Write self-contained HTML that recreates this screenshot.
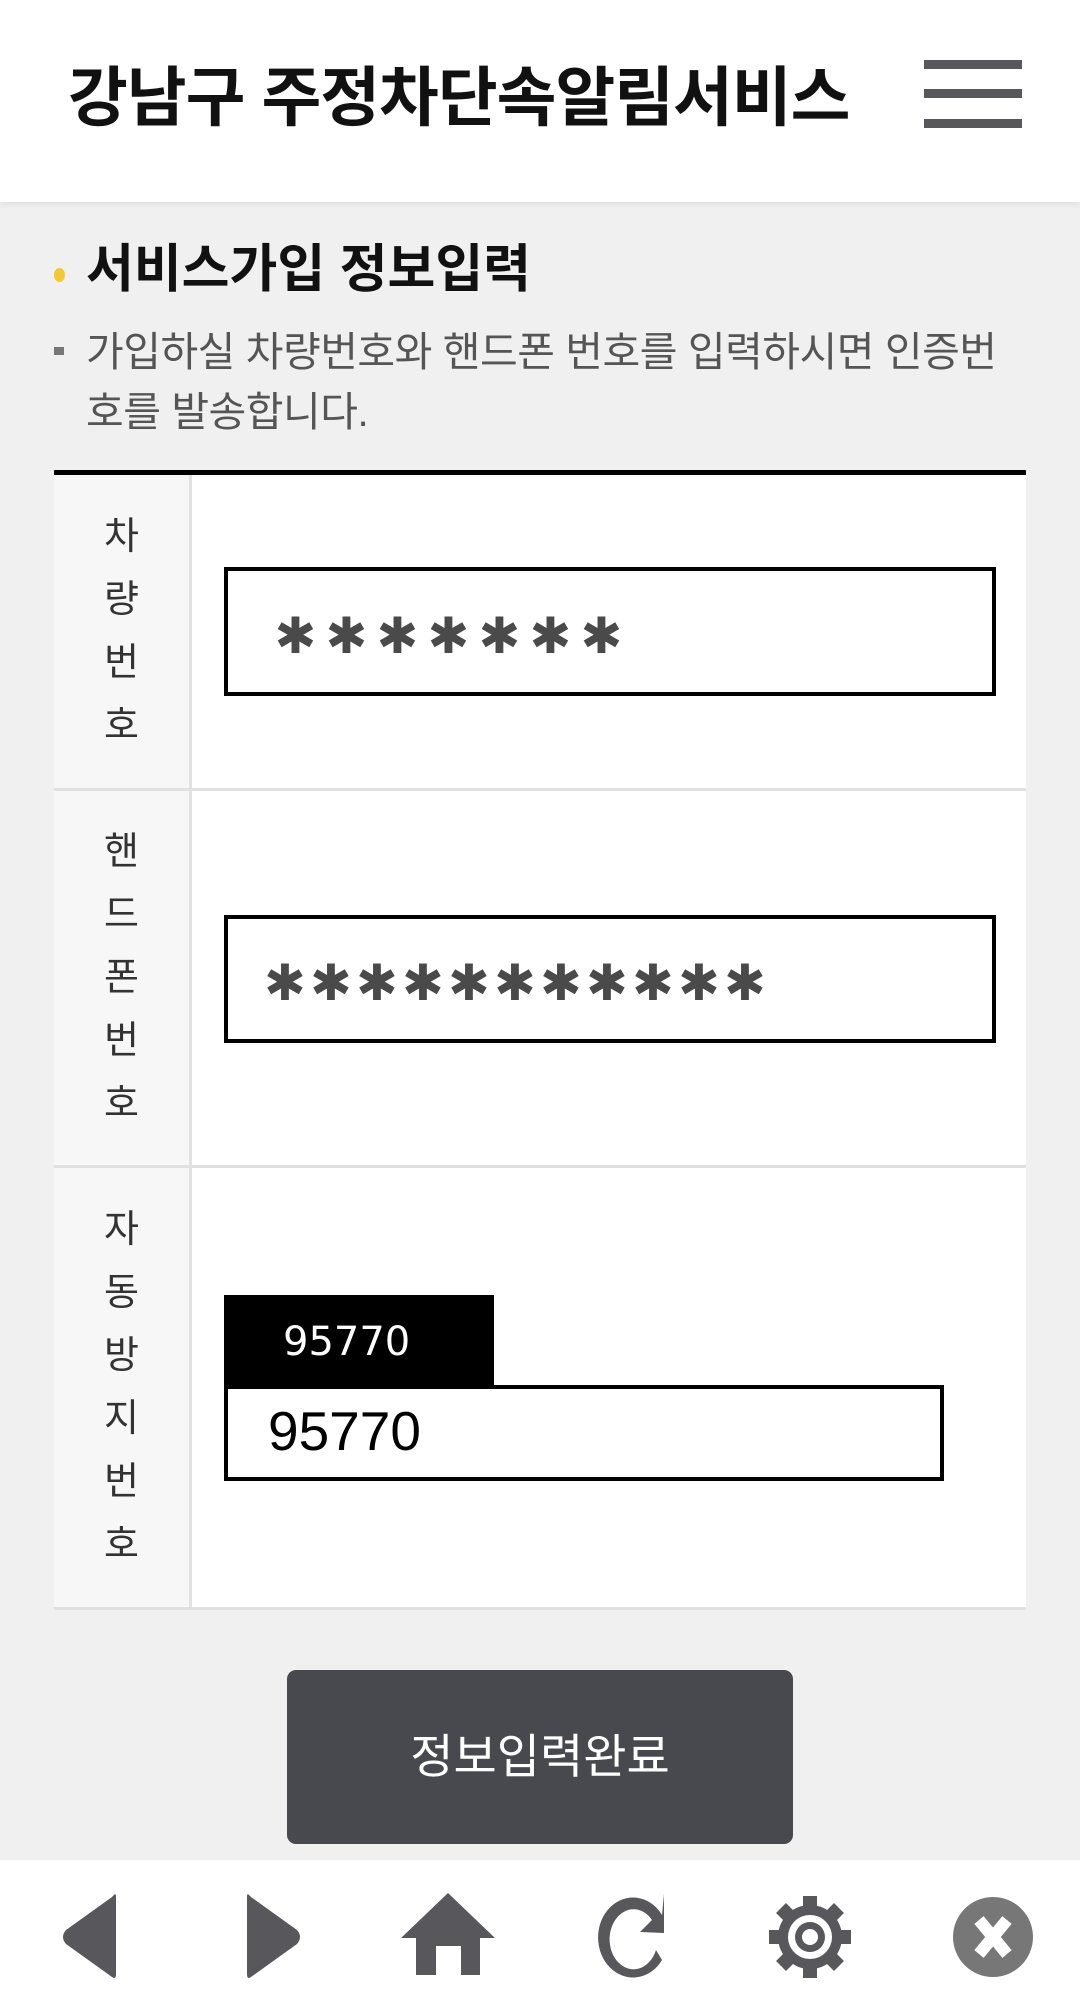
<!DOCTYPE html>
<html><head><meta charset="utf-8"><style>
*{margin:0;padding:0;box-sizing:border-box}
body{width:1080px;height:2006px;background:#f0f0f0;font-family:"Liberation Sans","Noto Sans CJK KR",sans-serif;position:relative;overflow:hidden}
.a{position:absolute}
.hdr{left:0;top:0;width:1080px;height:202px;background:#fff;box-shadow:0 2px 6px rgba(0,0,0,.08)}
.bar{left:924px;width:98px;height:9px;background:#58585c}
.lbl{left:54px;width:138px;background:#f7f7f7;border-right:3px solid #e2e2e2;font-size:38px;color:#333;text-align:center;line-height:63px;display:flex;flex-direction:column;justify-content:center}
.row{left:54px;width:972px;background:#fff;border-bottom:3px solid #e0e0e0}
.inp{border:4px solid #000;background:#fff}
.st{display:flex;font-family:"DejaVu Sans",sans-serif;color:#4a4a4a;font-size:50px;line-height:60px}
.st span{display:block;text-align:center}
</style></head><body>
<div class="a hdr"></div>
<div class="a" style="left:68px;top:56px;font-size:65px;font-weight:bold;color:#111;letter-spacing:-1px;line-height:84px;white-space:nowrap">강남구 주정차단속알림서비스</div>
<div class="a bar" style="top:60px"></div>
<div class="a bar" style="top:89px"></div>
<div class="a bar" style="top:119px"></div>

<div class="a" style="left:54px;top:268px;width:11px;height:14px;border-radius:50%;background:#f6c830"></div>
<div class="a" style="left:86px;top:236px;font-size:52px;font-weight:bold;color:#111;line-height:68px;white-space:nowrap">서비스가입 정보입력</div>
<div class="a" style="left:54px;top:347px;width:10px;height:8px;background:#777"></div>
<div class="a" style="left:86px;top:322px;width:960px;font-size:41px;color:#555;line-height:60px;letter-spacing:-0.5px">가입하실 차량번호와 핸드폰 번호를 입력하시면 인증번<br>호를 발송합니다.</div>

<div class="a" style="left:54px;top:470px;width:972px;height:5px;background:#000"></div>

<div class="a row" style="top:475px;height:316px"></div>
<div class="a lbl" style="top:475px;height:313px">차<br>량<br>번<br>호</div>
<div class="a inp" style="left:224px;top:567px;width:772px;height:129px"></div>
<div class="a st" style="left:270px;top:606px"><span style="width:51px">✱</span><span style="width:51px">✱</span><span style="width:51px">✱</span><span style="width:51px">✱</span><span style="width:51px">✱</span><span style="width:51px">✱</span><span style="width:51px">✱</span></div>

<div class="a row" style="top:791px;height:377px"></div>
<div class="a lbl" style="top:791px;height:374px">핸<br>드<br>폰<br>번<br>호</div>
<div class="a inp" style="left:224px;top:915px;width:772px;height:128px"></div>
<div class="a st" style="left:262px;top:953px"><span style="width:46px">✱</span><span style="width:46px">✱</span><span style="width:46px">✱</span><span style="width:46px">✱</span><span style="width:46px">✱</span><span style="width:46px">✱</span><span style="width:46px">✱</span><span style="width:46px">✱</span><span style="width:46px">✱</span><span style="width:46px">✱</span><span style="width:46px">✱</span></div>

<div class="a row" style="top:1168px;height:442px"></div>
<div class="a lbl" style="top:1168px;height:439px">자<br>동<br>방<br>지<br>번<br>호</div>
<div class="a" style="left:224px;top:1295px;width:270px;height:92px;background:#000"></div>
<div class="a" style="left:283px;top:1318px;font-size:40px;color:#fff;font-family:'DejaVu Sans',sans-serif;line-height:48px">95770</div>
<div class="a inp" style="left:224px;top:1385px;width:720px;height:96px"></div>
<div class="a" style="left:268px;top:1398px;font-size:55px;color:#000;line-height:66px">95770</div>

<div class="a" style="left:287px;top:1670px;width:506px;height:174px;background:#48484f;border-radius:9px;color:#fff;font-size:47px;text-align:center;line-height:174px">정보입력완료</div>

<div class="a" style="left:0;top:1860px;width:1080px;height:146px;background:#fff"></div>
<svg class="a" style="left:0;top:1860px" width="1080" height="146" viewBox="0 0 1080 146">
<path d="M116 36 L116 114 Q116 120 112 117 L66 84 Q60 77 66 70 L112 37 Q116 32 116 36Z" fill="#58585c"/>
<path d="M247 36 L247 114 Q247 120 251 117 L297 84 Q303 77 297 70 L251 37 Q247 32 247 36Z" fill="#58585c"/>
<path d="M448 33 L495 78 L480 78 L480 115 L461 115 L461 86 L436 86 L436 115 L416 115 L416 78 L401 78Z" fill="#58585c"/>
<path d="M662 55 A35 40 0 1 0 662 100 L656 90 A24 30 0 1 1 652 60 L640 72 L664 73 L664 34Z" fill="#58585c"/>
<g transform="translate(810 77)" fill="#58585c"><circle r="32"/><rect x="-7" y="-41" width="14" height="82"/><rect x="-7" y="-41" width="14" height="82" transform="rotate(45)"/><rect x="-7" y="-41" width="14" height="82" transform="rotate(90)"/><rect x="-7" y="-41" width="14" height="82" transform="rotate(135)"/><circle r="22" fill="#fff"/><circle r="15"/><circle r="8" fill="#fff"/></g>
<circle cx="993" cy="77" r="40" fill="#777"/>
<path d="M979 60 L1007 94 M1007 60 L979 94" stroke="#fff" stroke-width="12"/>
</svg>
</body></html>
